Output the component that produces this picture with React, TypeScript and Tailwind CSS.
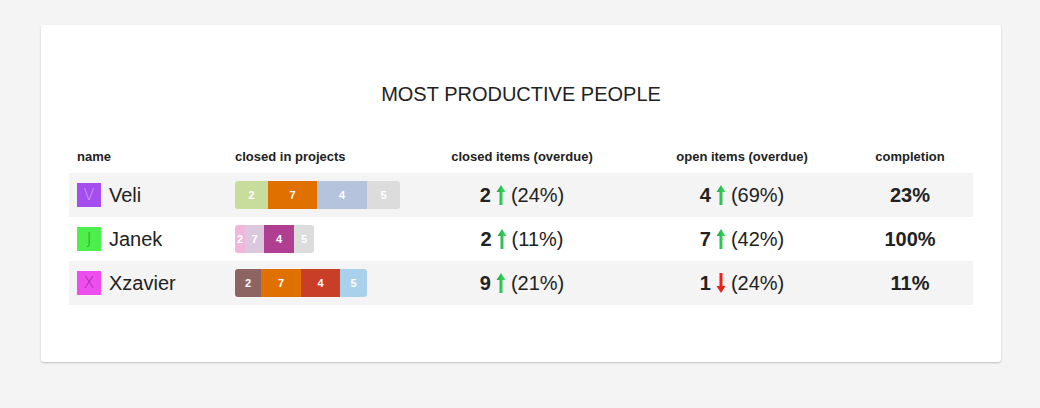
import React from "react";

type Seg = { n: number; w: number; bg: string };
type Person = {
  name: string;
  letter: string;
  avatarBg: string;
  avatarFg: string;
  segs: Seg[];
  closed: number;
  closedUp: boolean;
  closedPct: string;
  open: number;
  openUp: boolean;
  openPct: string;
  completion: string;
};

const people: Person[] = [
  {
    name: "Veli",
    letter: "V",
    avatarBg: "bg-[#a64df0]",
    avatarFg: "text-[#cf9ef7]",
    segs: [
      { n: 2, w: 33, bg: "bg-[#c8dc9c]" },
      { n: 7, w: 49, bg: "bg-[#e07000]" },
      { n: 4, w: 50, bg: "bg-[#b6c3dc]" },
      { n: 5, w: 33, bg: "bg-[#dcdcdc]" },
    ],
    closed: 2,
    closedUp: true,
    closedPct: "24%",
    open: 4,
    openUp: true,
    openPct: "69%",
    completion: "23%",
  },
  {
    name: "Janek",
    letter: "J",
    avatarBg: "bg-[#4def4d]",
    avatarFg: "text-[#1f9a2a]",
    segs: [
      { n: 2, w: 10, bg: "bg-[#f2b6da]" },
      { n: 7, w: 19, bg: "bg-[#dbc8df]" },
      { n: 4, w: 30, bg: "bg-[#b03f92]" },
      { n: 5, w: 20, bg: "bg-[#dcdcdc]" },
    ],
    closed: 2,
    closedUp: true,
    closedPct: "11%",
    open: 7,
    openUp: true,
    openPct: "42%",
    completion: "100%",
  },
  {
    name: "Xzavier",
    letter: "X",
    avatarBg: "bg-[#ee4eee]",
    avatarFg: "text-[#a52aa5]",
    segs: [
      { n: 2, w: 26, bg: "bg-[#8e6462]" },
      { n: 7, w: 40, bg: "bg-[#e07000]" },
      { n: 4, w: 39, bg: "bg-[#c93e27]" },
      { n: 5, w: 27, bg: "bg-[#a9d1ec]" },
    ],
    closed: 9,
    closedUp: true,
    closedPct: "21%",
    open: 1,
    openUp: false,
    openPct: "24%",
    completion: "11%",
  },
];

function Arrow({ up }: { up: boolean }) {
  if (up) {
    return (
      <svg width="10" height="20" viewBox="0 0 10 20" className="shrink-0">
        <defs>
          <linearGradient id="gUp" x1="0" x2="1" y1="0" y2="0">
            <stop offset="0" stopColor="#1fa844" />
            <stop offset="1" stopColor="#45dc6c" />
          </linearGradient>
        </defs>
        <path d="M5 0 L9.5 7 H6.5 V20 H3.5 V7 H0.5 Z" fill="url(#gUp)" />
      </svg>
    );
  }
  return (
    <svg width="10" height="20" viewBox="0 0 10 20" className="shrink-0">
      <path d="M5 20 L9.5 13 H6.5 V0 H3.5 V13 H0.5 Z" fill="#e8231c" />
    </svg>
  );
}

function Stat({ n, up, pct }: { n: number; up: boolean; pct: string }) {
  return (
    <div className="flex items-center justify-center gap-[5px] text-[20px]">
      <span className="font-bold">{n}</span>
      <Arrow up={up} />
      <span>({pct})</span>
    </div>
  );
}

const cols = "grid grid-cols-[158px_180px_230px_210px_126px]";

export default function App() {
  return (
    <div
      className="min-h-[408px] bg-[#f4f4f4] pt-[25px] px-[41px] text-[#222]"
      style={{ fontFamily: "'Liberation Sans', Arial, sans-serif" }}
    >
      <div className="w-[960px] h-[337px] bg-white rounded-[3px] shadow-[0_1px_2px_rgba(0,0,0,0.22)] px-[28px] pt-[58px]">
        <h1 className="text-center text-[20px] leading-[23px] font-normal">
          MOST PRODUCTIVE PEOPLE
        </h1>

        <div className="mt-[34px]">
          <div className={`${cols} h-[33px] items-center text-[13px] font-bold text-[#222]`}>
            <div className="pl-[8px]">name</div>
            <div className="pl-[8px]">closed in projects</div>
            <div className="text-center">closed items (overdue)</div>
            <div className="text-center">open items (overdue)</div>
            <div className="text-center">completion</div>
          </div>

          {people.map((p, i) => (
            <div
              key={p.name}
              className={`${cols} h-[44px] items-center ${i % 2 === 0 ? "bg-[#f4f4f4]" : "bg-white"}`}
            >
              <div className="pl-[8px] flex items-center gap-[8px]">
                <div
                  className={`w-[24px] h-[24px] ${p.avatarBg} ${p.avatarFg} flex items-center justify-center text-[16px] font-extralight font-['DejaVu_Sans',sans-serif]`}
                >
                  {p.letter}
                </div>
                <span className="text-[20px]">{p.name}</span>
              </div>

              <div className="pl-[8px]">
                <div className="flex h-[28px] rounded-[3px] overflow-hidden w-max">
                  {p.segs.map((s, j) => (
                    <div
                      key={j}
                      className={`${s.bg} flex items-center justify-center text-white text-[11px] font-bold`}
                      style={{ width: s.w }}
                    >
                      {s.n}
                    </div>
                  ))}
                </div>
              </div>

              <Stat n={p.closed} up={p.closedUp} pct={p.closedPct} />
              <Stat n={p.open} up={p.openUp} pct={p.openPct} />
              <div className="text-center text-[20px] font-bold">{p.completion}</div>
            </div>
          ))}
        </div>
      </div>
    </div>
  );
}
